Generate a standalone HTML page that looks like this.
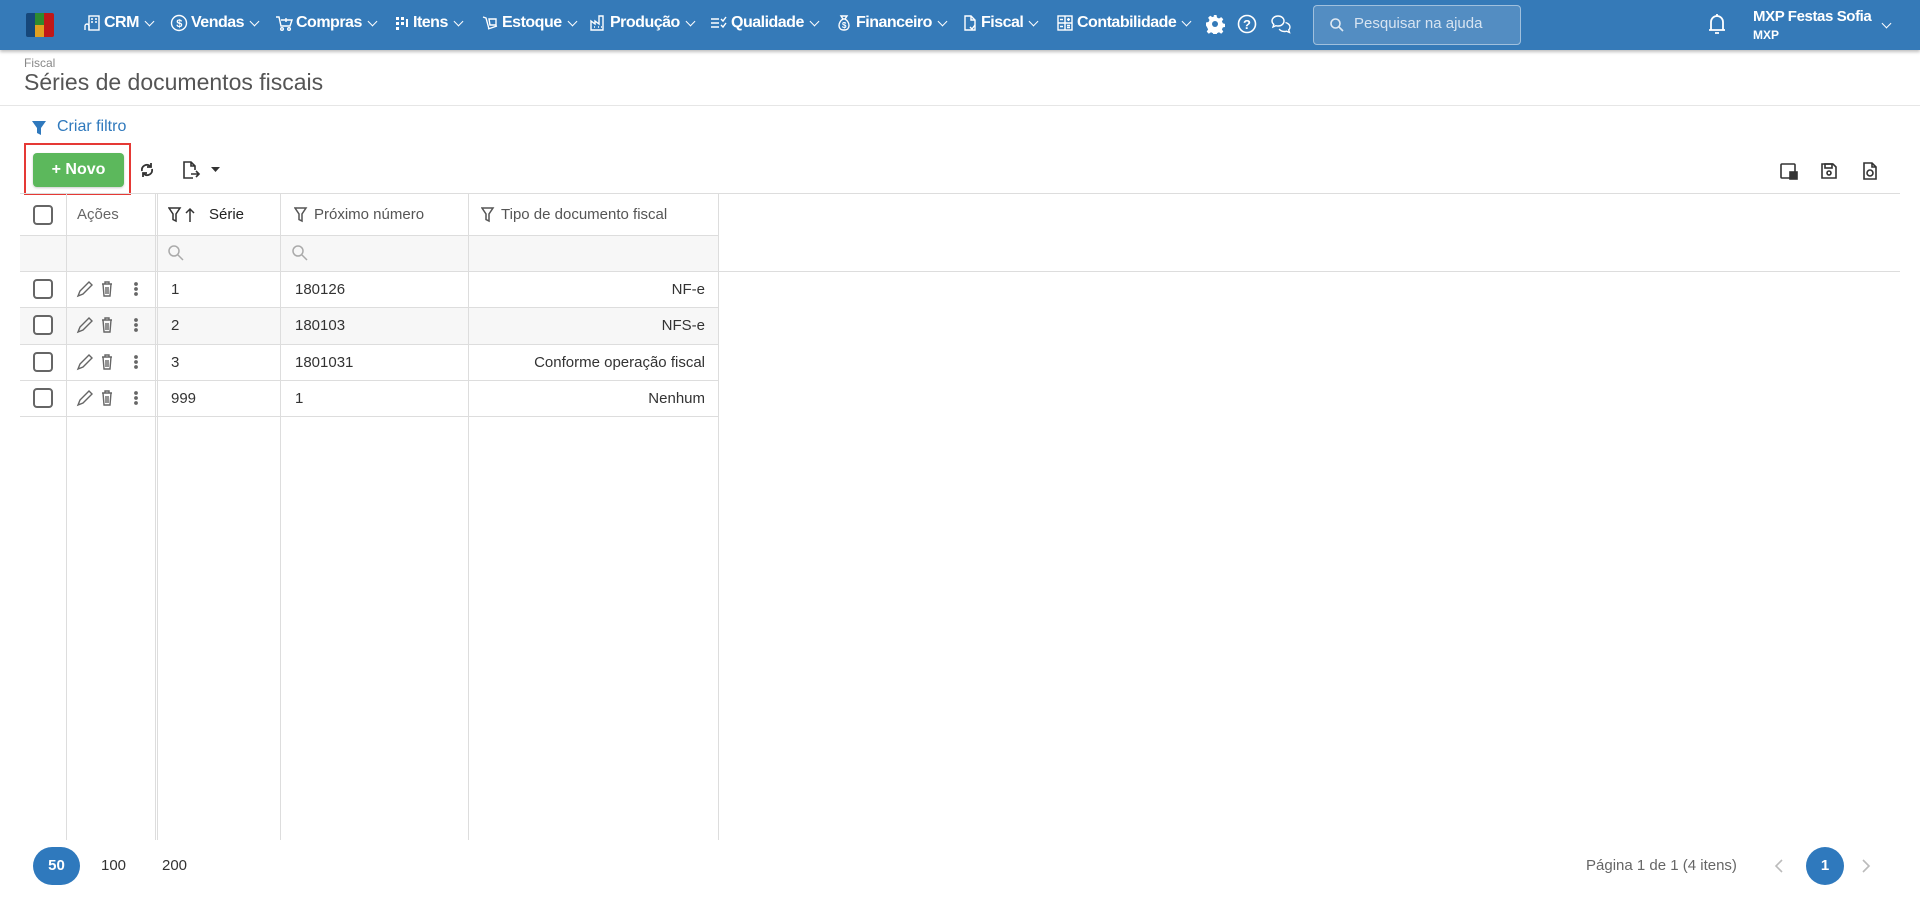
<!DOCTYPE html>
<html><head><meta charset="utf-8"><style>
*{box-sizing:border-box;margin:0;padding:0}
body{width:1920px;height:899px;overflow:hidden;background:#fff;font-family:"Liberation Sans",Arial,sans-serif;color:#333;position:relative}
.nav{position:absolute;left:0;top:0;width:1920px;height:50px;background:#357ab8;box-shadow:0 2px 3px rgba(0,0,0,.25)}
.ni{position:absolute;top:14px;color:#fff;font-size:16px;font-weight:bold;letter-spacing:-0.5px;white-space:nowrap;display:flex;align-items:center}
.ni svg{margin-right:3px}
.chev{display:inline-block;width:7px;height:7px;border-right:1.5px solid #fff;border-bottom:1.5px solid #fff;transform:rotate(45deg);margin:-4px 0 0 7px}
.abs{position:absolute}
.t{position:absolute;font-size:15px;color:#333;white-space:nowrap}
.vl{position:absolute;width:1px;background:#ddd}
.hl{position:absolute;height:1px;background:#ddd}
.cb{position:absolute;width:20px;height:20px;border:2px solid #666;border-radius:4px;background:#fff}
</style></head><body>
<div class="nav">
  <div class="abs" style="left:26px;top:13px;width:9px;height:24px;background:#16477a;border-radius:2px 0 0 2px"></div>
  <div class="abs" style="left:35px;top:13px;width:9px;height:12px;background:#2e8b2e"></div>
  <div class="abs" style="left:35px;top:25px;width:9px;height:12px;background:#e0a020"></div>
  <div class="abs" style="left:44px;top:13px;width:10px;height:24px;background:#c01818;border-radius:0 2px 2px 0"></div>

  <div class="ni" style="left:83px"><svg width="18" height="18" viewBox="0 0 18 18" fill="none" stroke="#fff" stroke-width="1.4"><rect x="6" y="2" width="10" height="14"/><path d="M8 5h2M12 5h2M8 8h2M12 8h2M2 16v-4a2 2 0 014 0v4"/></svg>CRM<span class="chev"></span></div>
  <div class="ni" style="left:170px"><svg width="18" height="18" viewBox="0 0 18 18" fill="none" stroke="#fff" stroke-width="1.4"><circle cx="9" cy="9" r="7.5"/><text x="9" y="13" font-size="11" fill="#fff" stroke="none" text-anchor="middle" font-family="Liberation Sans">$</text></svg>Vendas<span class="chev"></span></div>
  <div class="ni" style="left:275px"><svg width="18" height="18" viewBox="0 0 18 18" fill="none" stroke="#fff" stroke-width="1.4"><path d="M1 3h3l2 9h9l2-6H6M9 6h4M11 4v4"/><circle cx="7" cy="15" r="1.3"/><circle cx="14" cy="15" r="1.3"/></svg>Compras<span class="chev"></span></div>
  <div class="ni" style="left:394px"><svg width="16" height="18" viewBox="0 0 16 18" fill="#fff"><rect x="2" y="3" width="3" height="3"/><rect x="7" y="3" width="3" height="3"/><rect x="2" y="8" width="3" height="3"/><rect x="7" y="8" width="3" height="3"/><rect x="12" y="5" width="2" height="8"/><rect x="2" y="13" width="3" height="3"/></svg>Itens<span class="chev"></span></div>
  <div class="ni" style="left:481px"><svg width="18" height="18" viewBox="0 0 18 18" fill="none" stroke="#fff" stroke-width="1.4"><path d="M2 3l3 1 3 11M7 15l9-3M8 5h7v6H9z"/></svg>Estoque<span class="chev"></span></div>
  <div class="ni" style="left:589px"><svg width="18" height="18" viewBox="0 0 18 18" fill="none" stroke="#fff" stroke-width="1.4"><path d="M2 16V7l4 3V7l4 3V2h4v14z"/><path d="M5 13h1M9 13h1M12 13h1"/></svg>Produção<span class="chev"></span></div>
  <div class="ni" style="left:710px"><svg width="18" height="18" viewBox="0 0 18 18" fill="none" stroke="#fff" stroke-width="1.4"><path d="M1 5h8M1 9h8M1 13h8M11 5l2 2 3-4M11 11l2 2 3-4"/></svg>Qualidade<span class="chev"></span></div>
  <div class="ni" style="left:835px"><svg width="18" height="18" viewBox="0 0 18 18" fill="none" stroke="#fff" stroke-width="1.4"><path d="M6 2h6l-2 3h-2zM8 5C3 8 2 16 9 16s6-8 1-11"/><text x="9" y="14" font-size="8" fill="#fff" stroke="none" text-anchor="middle">$</text></svg>Financeiro<span class="chev"></span></div>
  <div class="ni" style="left:962px"><svg width="16" height="18" viewBox="0 0 16 18" fill="none" stroke="#fff" stroke-width="1.4"><path d="M3 2h6l4 4v10H3z"/><path d="M9 2v4h4M8 13l2 2 3-4"/></svg>Fiscal<span class="chev"></span></div>
  <div class="ni" style="left:1056px"><svg width="18" height="18" viewBox="0 0 18 18" fill="none" stroke="#fff" stroke-width="1.4"><rect x="2" y="2" width="14" height="14"/><path d="M2 9h14M9 2v14M4 5.5h3M11 5.5h3M12.5 4v3M4 12.5h3M11 11.5h3M11 13.5h3"/></svg>Contabilidade<span class="chev"></span></div>
  <svg class="abs" style="left:1205px;top:14px" width="20" height="20" viewBox="0 0 20 20"><path fill="#fff" d="M8.5 1h3l.5 2.5 2 1 2.2-1.4 2.1 2.1-1.4 2.2 1 2 2.5.5v3l-2.5.5-1 2 1.4 2.2-2.1 2.1-2.2-1.4-2 1-.5 2.5h-3l-.5-2.5-2-1-2.2 1.4-2.1-2.1 1.4-2.2-1-2L1 11.5v-3l2.5-.5 1-2-1.4-2.2 2.1-2.1 2.2 1.4 2-1z"/><circle cx="10" cy="10" r="3" fill="#357ab8"/></svg>
  <svg class="abs" style="left:1237px;top:14px" width="20" height="20" viewBox="0 0 20 20"><circle cx="10" cy="10" r="8.5" fill="none" stroke="#fff" stroke-width="1.6"/><text x="10" y="15" font-size="13" font-weight="bold" fill="#fff" text-anchor="middle" font-family="Liberation Sans">?</text></svg>
  <svg class="abs" style="left:1270px;top:14px" width="22" height="20" viewBox="0 0 22 20" fill="none" stroke="#fff" stroke-width="1.4"><path d="M8 2c3.5 0 6 2.2 6 5s-2.5 5-6 5c-.8 0-1.5-.1-2.2-.3L3 13l.8-2.6C2.7 9.5 2 8.3 2 7c0-2.8 2.7-5 6-5z"/><path d="M15.5 8.5c2.5.6 4.5 2.4 4.5 4.5 0 1.1-.5 2.1-1.3 2.9l.8 2.6-2.8-1.3c-.7.2-1.4.3-2.2.3-2.3 0-4.3-1-5.3-2.5"/></svg>
  <div class="abs" style="left:1313px;top:5px;width:208px;height:40px;border:1px solid rgba(255,255,255,.45);border-radius:4px;background:rgba(255,255,255,.15)"></div>
  <svg class="abs" style="left:1329px;top:17px" width="16" height="16" viewBox="0 0 16 16" fill="none" stroke="#dfe9f3" stroke-width="1.6"><circle cx="6.5" cy="6.5" r="4.5"/><path d="M10 10l4 4"/></svg>
  <div class="abs" style="left:1354px;top:15px;font-size:15px;color:#d7e4f1">Pesquisar na ajuda</div>
  <svg class="abs" style="left:1707px;top:12px" width="20" height="24" viewBox="0 0 20 24" fill="none" stroke="#fff" stroke-width="1.8"><path d="M4 18V10a6 6 0 0112 0v8M2 18h16"/><path d="M10 2v2M8 21h4"/></svg>
  <div class="abs" style="left:1753px;top:8px;font-size:15px;font-weight:bold;color:#fff;letter-spacing:-0.4px">MXP Festas Sofia</div>
  <div class="abs" style="left:1753px;top:28px;font-size:12px;font-weight:bold;color:#fff">MXP</div>
  <span class="chev abs" style="left:1876px;top:24px"></span>
</div>

<div class="abs" style="left:24px;top:56px;font-size:12px;color:#888">Fiscal</div>
<div class="abs" style="left:24px;top:69px;font-size:23px;color:#555">Séries de documentos fiscais</div>
<div class="hl" style="left:0;top:105px;width:1920px;background:#e6e6e6"></div>

<svg class="abs" style="left:31px;top:120px" width="16" height="16" viewBox="0 0 16 16"><path d="M1 1h14l-5 7v7l-4-2V8z" fill="#2f79bd"/></svg>
<div class="abs" style="left:57px;top:118px;font-size:16px;color:#2f79bd">Criar filtro</div>

<div class="abs" style="left:24px;top:143px;width:107px;height:52px;border:2px solid #e53935"></div>
<div class="abs" style="left:33px;top:153px;width:91px;height:34px;background:#5cb85c;border-radius:4px;box-shadow:0 1px 2px rgba(0,0,0,.2);color:#fff;font-weight:bold;font-size:16px;line-height:34px;text-align:center">+ Novo</div>
<svg class="abs" style="left:138px;top:161px" width="18" height="18" viewBox="0 0 18 18" fill="none" stroke="#333" stroke-width="1.8"><path d="M4 10a5 5 0 018-5l1 1M14 8a5 5 0 01-8 5l-1-1"/><path d="M13 2v4h-4M5 16v-4h4"/></svg>
<svg class="abs" style="left:181px;top:160px" width="20" height="20" viewBox="0 0 20 20" fill="none" stroke="#333" stroke-width="1.6"><path d="M12 18H3V2h7l4 4v4M10 2v4h4M10 14h8M15 11l3 3-3 3"/></svg>
<svg class="abs" style="left:211px;top:167px" width="9" height="6"><path d="M0 0h9L4.5 5z" fill="#333"/></svg>

<svg class="abs" style="left:1779px;top:161px" width="20" height="20" viewBox="0 0 20 20" fill="none" stroke="#333" stroke-width="1.6"><rect x="2" y="3" width="14" height="14" rx="1"/><rect x="11" y="11" width="7" height="7" fill="#333"/></svg>
<svg class="abs" style="left:1819px;top:161px" width="20" height="20" viewBox="0 0 20 20" fill="none" stroke="#333" stroke-width="1.6"><path d="M3 3h11l3 3v11H3z"/><rect x="6" y="3" width="7" height="4"/><circle cx="10" cy="12" r="2"/></svg>
<svg class="abs" style="left:1860px;top:161px" width="20" height="20" viewBox="0 0 20 20" fill="none" stroke="#333" stroke-width="1.6"><path d="M4 2h8l4 4v12H4z"/><path d="M12 2v4h4"/><circle cx="10" cy="12" r="3"/></svg>

<div class="hl" style="left:20px;top:193px;width:1880px"></div>
<div class="abs" style="left:20px;top:235px;width:698px;height:36px;background:#f7f7f7"></div>
<div class="hl" style="left:20px;top:235px;width:698px"></div>
<div class="hl" style="left:20px;top:271px;width:1880px"></div>
<div class="abs" style="left:20px;top:308px;width:698px;height:36px;background:#f7f7f7"></div>
<div class="hl" style="left:20px;top:307px;width:698px"></div>
<div class="hl" style="left:20px;top:344px;width:698px"></div>
<div class="hl" style="left:20px;top:380px;width:698px"></div>
<div class="hl" style="left:20px;top:416px;width:698px"></div>
<div class="vl" style="left:66px;top:193px;height:647px"></div>
<div class="vl" style="left:155px;top:193px;height:647px"></div>
<div class="vl" style="left:157px;top:193px;height:647px"></div>
<div class="vl" style="left:280px;top:193px;height:647px"></div>
<div class="vl" style="left:468px;top:193px;height:647px"></div>
<div class="vl" style="left:718px;top:193px;height:647px"></div>

<div class="cb" style="left:33px;top:205px"></div>
<div class="t" style="left:77px;top:206px;color:#666">Ações</div>
<svg class="abs" style="left:168px;top:206px" width="34" height="18" viewBox="0 0 34 18" fill="none" stroke="#333" stroke-width="1.5"><path d="M1 2h11l-4 6v7l-3-1.5V8z"/><path d="M22 16V3M18 7l4-4 4 4"/></svg>
<div class="t" style="left:209px;top:206px;color:#222">Série</div>
<svg class="abs" style="left:294px;top:206px" width="14" height="18" viewBox="0 0 14 18" fill="none" stroke="#555" stroke-width="1.5"><path d="M1 2h11l-4 6v7l-3-1.5V8z"/></svg>
<div class="t" style="left:314px;top:206px;color:#555">Próximo número</div>
<svg class="abs" style="left:481px;top:206px" width="14" height="18" viewBox="0 0 14 18" fill="none" stroke="#555" stroke-width="1.5"><path d="M1 2h11l-4 6v7l-3-1.5V8z"/></svg>
<div class="t" style="left:501px;top:206px;color:#555">Tipo de documento fiscal</div>

<svg class="abs" style="left:167px;top:244px" width="18" height="18" viewBox="0 0 18 18" fill="none" stroke="#aaa" stroke-width="1.5"><circle cx="7" cy="7" r="5"/><path d="M11 11l5 5"/></svg>
<svg class="abs" style="left:291px;top:244px" width="18" height="18" viewBox="0 0 18 18" fill="none" stroke="#aaa" stroke-width="1.5"><circle cx="7" cy="7" r="5"/><path d="M11 11l5 5"/></svg>

<div class="cb" style="left:33px;top:279px"></div>
<div class="cb" style="left:33px;top:315px"></div>
<div class="cb" style="left:33px;top:352px"></div>
<div class="cb" style="left:33px;top:388px"></div>

<svg class="abs" style="left:76px;top:279px" width="64" height="130" viewBox="0 0 64 130" fill="none" stroke="#666" stroke-width="1.4">
 <g id="ic"><path d="M2 17l2-5 9-9 3 3-9 9z"/><path d="M26 5h10M29 5V3h4v2M27 5l1 12h6l1-12M30 8v7M32 8v7"/><circle cx="60" cy="5" r="1.2" fill="#666"/><circle cx="60" cy="10" r="1.2" fill="#666"/><circle cx="60" cy="15" r="1.2" fill="#666"/></g>
 <use href="#ic" y="36"/><use href="#ic" y="73"/><use href="#ic" y="109"/>
</svg>

<div class="t" style="left:171px;top:281px">1</div>
<div class="t" style="left:295px;top:281px">180126</div>
<div class="t" style="right:1215px;top:281px">NF-e</div>
<div class="t" style="left:171px;top:317px">2</div>
<div class="t" style="left:295px;top:317px">180103</div>
<div class="t" style="right:1215px;top:317px">NFS-e</div>
<div class="t" style="left:171px;top:354px">3</div>
<div class="t" style="left:295px;top:354px">1801031</div>
<div class="t" style="right:1215px;top:354px">Conforme operação fiscal</div>
<div class="t" style="left:171px;top:390px">999</div>
<div class="t" style="left:295px;top:390px">1</div>
<div class="t" style="right:1215px;top:390px">Nenhum</div>

<div class="abs" style="left:33px;top:847px;width:47px;height:38px;border-radius:19px;background:#2f79bd;color:#fff;font-weight:bold;font-size:15px;line-height:38px;text-align:center">50</div>
<div class="t" style="left:101px;top:857px">100</div>
<div class="t" style="left:162px;top:857px">200</div>
<div class="t" style="left:1586px;top:857px;color:#666">Página 1 de 1 (4 itens)</div>
<svg class="abs" style="left:1773px;top:858px" width="12" height="16" viewBox="0 0 12 16" fill="none" stroke="#bbb" stroke-width="1.6"><path d="M9 2L3 8l6 6"/></svg>
<div class="abs" style="left:1806px;top:847px;width:38px;height:38px;border-radius:19px;background:#2f79bd;color:#fff;font-weight:bold;font-size:15px;line-height:38px;text-align:center">1</div>
<svg class="abs" style="left:1860px;top:858px" width="12" height="16" viewBox="0 0 12 16" fill="none" stroke="#bbb" stroke-width="1.6"><path d="M3 2l6 6-6 6"/></svg>
</body></html>
